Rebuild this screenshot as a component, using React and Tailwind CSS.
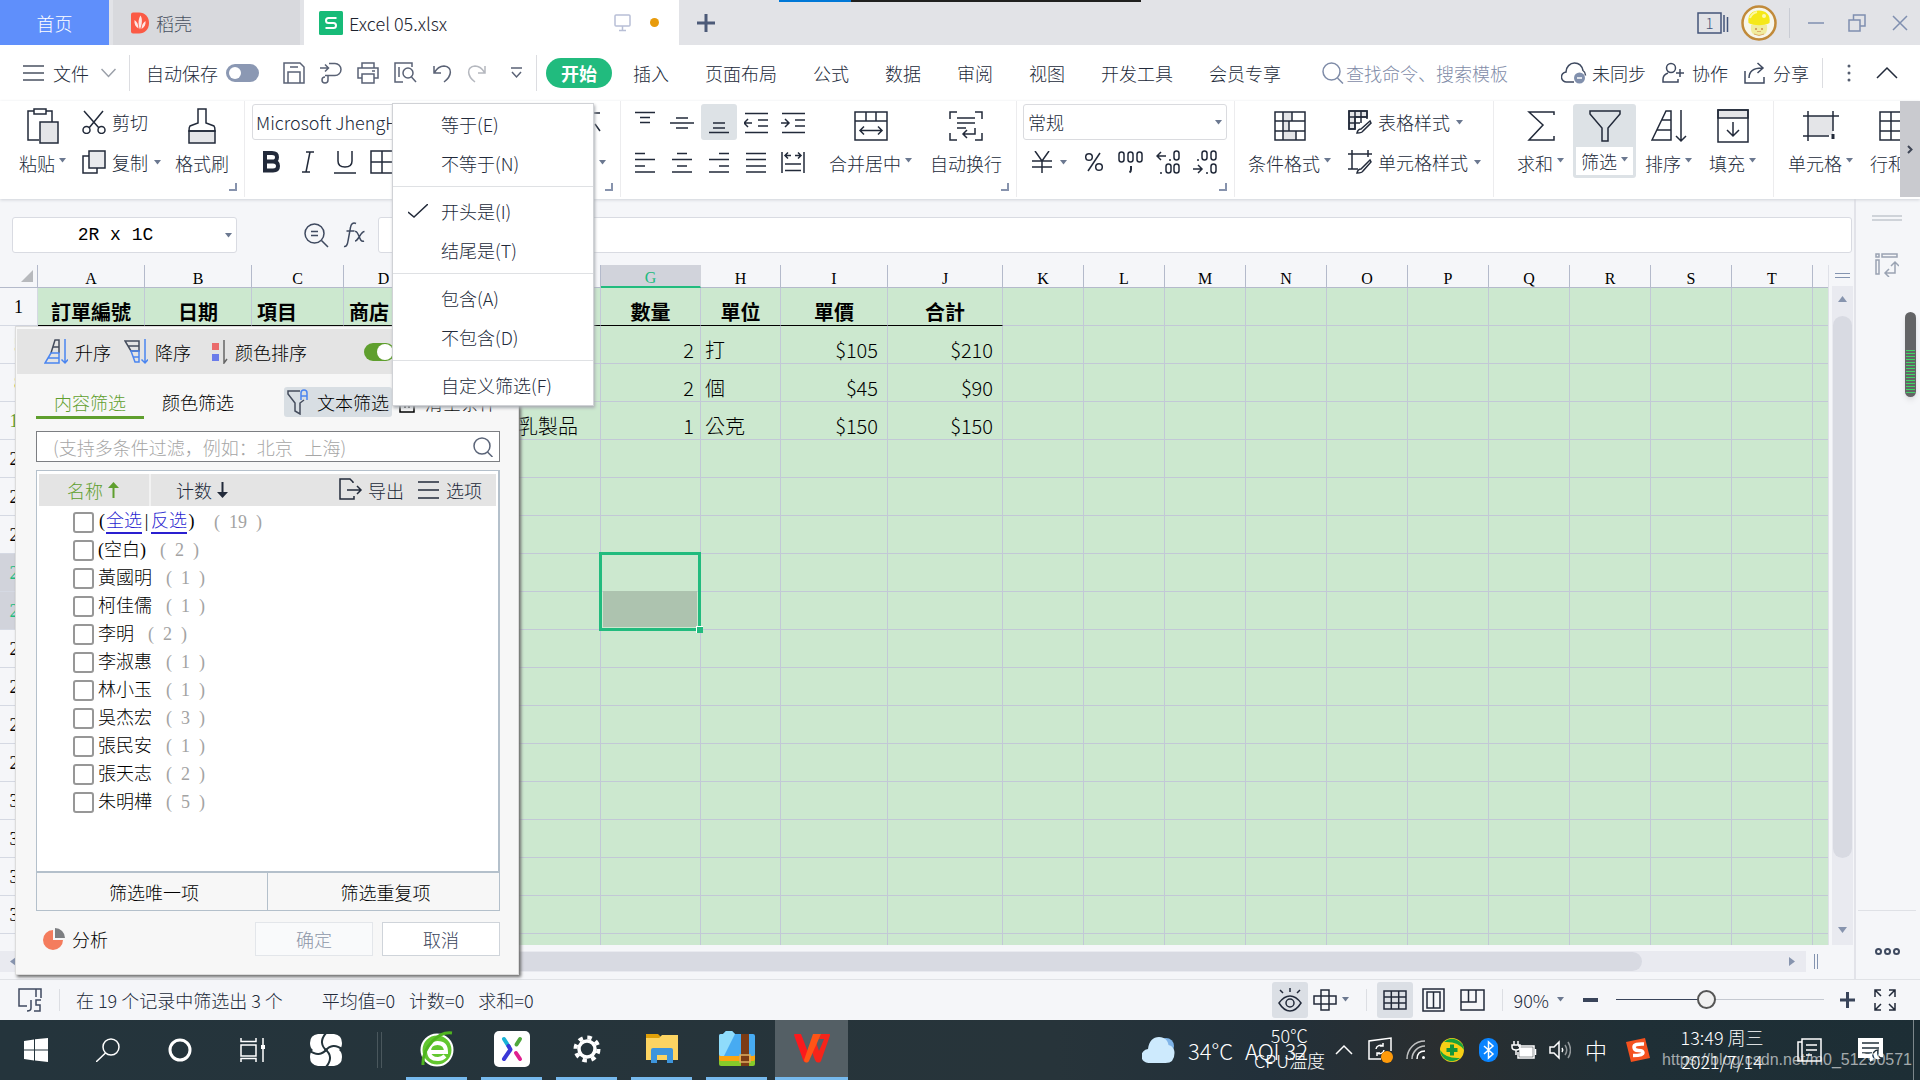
import { useState } from "react";
import clsx from "clsx";

const SANS = "font-['Noto_Sans_CJK_SC',sans-serif]";
const SERIF = "font-['Liberation_Serif','Noto_Sans_CJK_SC',serif]";

function Svg({ w = 24, h = 24, box, className, children, sw = 1.5 }) {
    return (
        <svg
            width={w}
            height={h}
            viewBox={box || `0 0 ${w} ${h}`}
            fill="none"
            stroke="currentColor"
            strokeWidth={sw}
            className={clsx("shrink-0", className)}
            aria-hidden="true"
        >
            {children}
        </svg>
    );
}

function Caret({ className }) {
    return (
        <svg width="7" height="5" viewBox="0 0 7 5" className={clsx("shrink-0 fill-[#6b7890]", className)} aria-hidden="true">
            <path d="M0 0h7L3.500 4.500z" />
        </svg>
    );
}

/* ---------- title bar ---------- */

function TitleBar() {
    return (
        <header className="relative flex h-[45px] shrink-0 items-stretch bg-[#e2e3e7]">
            <div className="absolute left-[779px] top-0 flex h-[2px] w-[362px] bg-[#20201f]">
                <div className="w-[72px] bg-[#0078d7]" />
            </div>
            <button className="w-[109px] bg-[#5f8ffb] text-lg text-white">首页</button>
            <button className="ml-1 flex w-[187px] items-center gap-[7px] bg-[#d8d9dd] pl-[18px] text-lg text-[#4a5262]">
                <svg width="18" height="22" viewBox="0 0 18 22" aria-hidden="true">
                    <path d="M0 2.500Q0 .5 2 .5h6c6 0 10 4.500 10 10.500S14 21.500 8 21.500H2q-2 0-2-2z" fill="#fb5a45" />
                    <path d="M9.500 3.500c2 3 2 8-.5 14-2-5-2-10 .5-14zM3.500 8c2.500 1.500 4 4.500 4 8.500C4.500 15 3 12 3.500 8zM14.500 9c.5 3.500-1 6.500-4 8 0-3.500 1.500-6.500 4-8z" fill="#fff" opacity=".85" />
                </svg>
                稻壳
            </button>
            <div className="ml-1 flex w-[375px] items-center bg-white pl-[15px] pr-5 text-lg text-[#1c222e]">
                <svg width="24" height="24" viewBox="0 0 24 24" className="mr-[6px]" aria-hidden="true">
                    <rect width="24" height="24" rx="1.500" fill="#17bb78" />
                    <path d="M17.500 7H9.500Q7 7 7 9.500T9.500 12h5Q17 12 17 14.500T14.500 17H6.500" fill="none" stroke="#fff" strokeWidth="2" />
                </svg>
                Excel 05.xlsx
                <Svg w={18} h={18} className="ml-auto mr-[18px] text-[#b8bfd6]">
                    <rect x="1" y="1" width="15" height="11" rx="1" />
                    <path d="M8.500 12v4.500M5 16.500h7" />
                </Svg>
                <span className="size-[9px] rounded-full bg-[#e89b0c]" />
            </div>
            <button className="flex w-[54px] items-center justify-center text-[#4c5a78]" aria-label="新建">
                <Svg w={18} h={18} sw={3}>
                    <path d="M9 0v18M0 9h18" />
                </Svg>
            </button>
            <div className="ml-auto flex items-center pr-3 text-[#7f8fb0]">
                <button className="mr-3 text-[#44557a]" aria-label="窗口">
                    <Svg w={32} h={22}>
                        <rect x="1" y="1" width="23" height="20" />
                        <path d="M27 3v17M30.500 5v15" />
                        <text x="12.500" y="16.500" textAnchor="middle" fontSize="15" fill="currentColor" stroke="none">1</text>
                    </Svg>
                </button>
                <button className="mr-3" aria-label="账号">
                    <svg width="36" height="36" viewBox="0 0 36 36" aria-hidden="true">
                        <circle cx="18" cy="18" r="16.500" fill="#f7f6ea" stroke="#c18a3a" strokeWidth="2.500" />
                        <path d="M10 20q-1 9 4 10h8q5-1 4-10z" fill="#f1ec9c" />
                        <path d="M7.500 18C6 9 12 5.500 18 5.500S30 9 28.500 18c-5 3-16 3-21 0z" fill="#f5e81a" />
                        <path d="M9 13q2-5 7-6" stroke="#fbf8a0" strokeWidth="2" fill="none" />
                        <circle cx="23" cy="11" r="2" fill="#fdf9b0" />
                        <circle cx="15" cy="24" r="1" fill="#c98a4a" />
                        <circle cx="21" cy="24" r="1" fill="#c98a4a" />
                        <path d="M13 29q5 3 10 0M16 26.500h4" stroke="#dfae6a" fill="none" />
                    </svg>
                </button>
                <span className="mr-[18px] h-[30px] w-px bg-[#c9ccd4]" />
                <button className="mr-6" aria-label="最小化">
                    <Svg w={16} h={18}><path d="M0 9h16" /></Svg>
                </button>
                <button className="mr-[26px]" aria-label="还原">
                    <Svg w={18} h={18}><path d="M1 6h11v11H1zM5.500 6V1H17v11h-5" /></Svg>
                </button>
                <button aria-label="关闭">
                    <Svg w={16} h={16}><path d="M1 1l14 14M15 1L1 15" /></Svg>
                </button>
            </div>
        </header>
    );
}

/* ---------- quick access + ribbon tabs ---------- */

const tabs = ["插入", "页面布局", "公式", "数据", "审阅", "视图", "开发工具", "会员专享"];

function TabRow() {
    return (
        <nav className="flex h-14 shrink-0 items-center bg-white pl-[23px] pr-[22px] text-lg text-[#222a3a]">
            <button className="flex items-center gap-[9px]">
                <Svg w={21} h={16} className="text-[#4a5262]"><path d="M0 1h21M0 8h21M0 15h21" /></Svg>
                文件
                <Svg w={15} h={10} className="ml-[3px] text-[#9a9fa8]"><path d="M.5 1l7 7.500 7-7.500" /></Svg>
            </button>
            <span className="ml-[13px] mr-4 h-9 w-px bg-[#dcdde1]" />
            <label className="flex items-center gap-2">
                自动保存
                <input
                    type="checkbox"
                    className="h-[18px] w-[33px] appearance-none rounded-full bg-[#8b98b3] before:ml-[3px] before:mt-[3px] before:block before:size-3 before:rounded-full before:bg-white"
                />
            </label>
            <div className="ml-6 flex items-center gap-[15px] text-[#5a6275]">
                <button aria-label="保存">
                    <Svg w={22} h={22}>
                        <path d="M1 1h16l4 4v16H1zM5 21V10h12v11M7 5h8" />
                    </Svg>
                </button>
                <button aria-label="输出为PDF">
                    <Svg w={22} h={22}>
                        <path d="M0 6h8M5 2.500L8.500 6 5 9.500M9 1.500h6a6 6 0 0 1 0 12H5M8 13.500V18a3 3 0 1 1-3-3" />
                    </Svg>
                </button>
                <button aria-label="打印">
                    <Svg w={22} h={22}>
                        <path d="M5 6V1h12v5M5 16H1V6h20v10h-4M5 12h12v9H5zM15 9h3" />
                    </Svg>
                </button>
                <button aria-label="打印预览">
                    <Svg w={23} h={22}>
                        <path d="M9 20H1V1h17v4M5 5v10" />
                        <circle cx="14" cy="11" r="5" />
                        <path d="M17.500 15l4.500 5" />
                    </Svg>
                </button>
                <button aria-label="撤销">
                    <Svg w={20} h={20}>
                        <path d="M2 3v7h7M2 10C5 5 9 3 12 3c9 1 8 10 0 16" />
                    </Svg>
                </button>
                <button className="text-[#b5b8bf]" aria-label="恢复">
                    <Svg w={20} h={20}>
                        <path d="M18 3v7h-7M18 10C15 5 11 3 8 3c-9 1-8 10 0 16" />
                    </Svg>
                </button>
                <button className="ml-2" aria-label="更多">
                    <Svg w={13} h={12}>
                        <path d="M1 1h11M2 5l4.500 5L11 5" />
                    </Svg>
                </button>
            </div>
            <span className="ml-[13px] mr-[9px] h-9 w-px bg-[#dcdde1]" />
            <button className="h-[30px] w-[66px] rounded-full bg-[#21bb7e] font-bold text-white">开始</button>
            <div className="ml-[21px] flex gap-9">
                {tabs.map((t) => (
                    <button key={t} className="whitespace-nowrap">{t}</button>
                ))}
            </div>
            <label className="ml-[41px] flex items-center gap-[2px] text-[#7f8ca8]">
                <Svg w={22} h={22}>
                    <circle cx="9.500" cy="9.500" r="8.500" />
                    <path d="M15.500 16l5.500 5.500" />
                </Svg>
                <input className="w-[180px] outline-none placeholder:text-[#7f8ca8]" placeholder="查找命令、搜索模板" />
            </label>
            <div className="ml-auto flex items-center">
                <button className="mr-4 flex items-center gap-[5px]">
                    <Svg w={26} h={22} className="text-[#3f4a60]">
                        <path d="M13 20H6a5 5 0 0 1-1-10C5 5 9 1 13.500 1S21 4 22 8.500a6 6 0 0 1 2.500 5" />
                        <circle cx="18.500" cy="16" r="5.500" fill="#8190ad" stroke="none" />
                        <path d="M16 16h5" stroke="#fff" />
                    </Svg>
                    未同步
                </button>
                <button className="mr-4 flex items-center gap-2">
                    <Svg w={22} h={22} className="text-[#3f4a60]">
                        <circle cx="9" cy="6" r="4.500" />
                        <path d="M6 11c-3 1-5 3.500-5 6.500V20h15v-3M18 7v8M14 11h8" />
                    </Svg>
                    协作
                </button>
                <button className="mr-[13px] flex items-center gap-[7px]">
                    <Svg w={22} h={22} className="text-[#3f4a60]">
                        <path d="M1 9v12h19v-6M5 16C5 9 9 6 18 6M13.500 1L19 6l-5.500 5" />
                    </Svg>
                    分享
                </button>
                <span className="h-[30px] w-px bg-[#dcdde1]" />
                <button className="ml-6 mr-[25px]" aria-label="菜单">
                    <svg width="4" height="18" viewBox="0 0 4 18" fill="#555e70" aria-hidden="true">
                        <circle cx="2" cy="2" r="1.500" /><circle cx="2" cy="9" r="1.500" /><circle cx="2" cy="16" r="1.500" />
                    </svg>
                </button>
                <button aria-label="收起功能区">
                    <Svg w={22} h={14}><path d="M1 12L11 2l10 10" /></Svg>
                </button>
            </div>
        </nav>
    );
}

/* ---------- ribbon ---------- */

function Group({ className, corner, children }) {
    return (
        <div className={clsx("relative flex shrink-0 border-r border-[#ececee] pt-[3px]", className)}>
            {children}
            {corner && (
                <Svg w={8} h={8} className="absolute bottom-[6px] right-[7px] text-[#8793ad]" sw={2}>
                    <path d="M7 0v7H0" />
                </Svg>
            )}
        </div>
    );
}

function BigButton({ icon, label, caret = true, active, className }) {
    return (
        <button
            className={clsx(
                "flex h-[74px] shrink-0 flex-col items-center rounded-[3px] text-lg text-[#222a3a]",
                active && "bg-[#dde2e6] px-[3px] pb-[3px]",
                className
            )}
        >
            <span className="flex h-[43px] items-center justify-center">{icon}</span>
            <span className={clsx("flex flex-1 items-center gap-1 whitespace-nowrap", active && "w-full justify-center bg-white")}>
                {label}
                {caret && <Caret className="mb-1" />}
            </span>
        </button>
    );
}

function SmallButton({ icon, label, caret }) {
    return (
        <button className="flex h-9 items-center gap-[6px] whitespace-nowrap text-lg">
            {icon}
            {label}
            {caret && <Caret />}
        </button>
    );
}

function IconButton({ label, active, children }) {
    return (
        <button
            aria-label={label}
            className={clsx("flex h-9 w-9 items-center justify-center rounded-[3px]", active && "bg-[#dde2e6]")}
        >
            {children}
        </button>
    );
}

const alignIcons = [
    ["顶端对齐", "M2 2.500h20M7 7.500h10M7 12.500h10"],
    ["垂直居中", "M6 8h12M0 13h24M6 18h12"],
    ["底端对齐", "M6 13h12M6 18h12M2 22.500h20"],
    ["减少缩进", "M0 13h8M4 9l-4 4 4 4M1 3.500h23M14 10h10M14 16h10M1 22.500h23"],
    ["增加缩进", "M0 13h8M4 9l4 4-4 4M1 3.500h23M14 10h10M14 16h10M1 22.500h23"],
    ["左对齐", "M2 3.500h10M2 9.500h20M2 16h10M2 22h20"],
    ["居中", "M7 3.500h10M2 9.500h20M7 16h10M2 22h20"],
    ["右对齐", "M12 3.500h10M2 9.500h20M12 16h10M2 22h20"],
    ["两端对齐", "M2 3.500h20M2 9.500h20M2 16h20M2 22h20"],
    ["分散对齐", "M1 2v21M23 2v21M4 5.500h6M14 5.500h6M7 2.500l-3 3 3 3M17 2.500l3 3-3 3M4 14h16M4 20.500h16"],
];

function Ribbon() {
    return (
        <section className="relative z-10 flex h-[98px] shrink-0 bg-white pb-[2px] text-[#222a3a] shadow-[0_1px_3px_#cfd2d8]">
            <Group corner className="pl-[19px] pr-[15px]">
                <BigButton
                    label="粘贴"
                    icon={
                        <Svg w={32} h={36}>
                            <path d="M12 32H1V3h24v11" />
                            <rect x="7" y="1" width="12" height="5" fill="#fff" />
                            <rect x="13" y="14" width="18" height="21" fill="#e4e5e8" />
                        </Svg>
                    }
                />
                <div className="ml-4 flex flex-col gap-1">
                    <SmallButton
                        label="剪切"
                        icon={
                            <Svg>
                                <path d="M2 1l15 17M21 1L7 18" />
                                <circle cx="4.500" cy="20" r="3.500" />
                                <circle cx="19.500" cy="20" r="3.500" />
                            </Svg>
                        }
                    />
                    <SmallButton
                        label="复制"
                        caret
                        icon={
                            <Svg>
                                <path d="M7 6H1v17h14v-5" />
                                <rect x="7" y="1" width="16" height="17" fill="#e9eaed" />
                            </Svg>
                        }
                    />
                </div>
                <BigButton
                    className="ml-[14px]"
                    label="格式刷"
                    caret={false}
                    icon={
                        <Svg w={28} h={36}>
                            <path d="M1 23v12h26V23z" fill="#e4e5e8" />
                            <path d="M10 1h8v14l8 3q1 1 1 5H1q0-4 1-5l8-3z" />
                        </Svg>
                    }
                />
            </Group>

            <Group corner className="pl-[7px] pr-[14px]">
                <div className="flex w-[354px] flex-col gap-1">
                    <div className="flex h-9 items-center justify-between">
                        <select
                            aria-label="字体"
                            className="h-9 w-[190px] appearance-none rounded-[3px] border border-[#dadbdf] bg-white pl-[3px] text-lg"
                        >
                            <option>Microsoft JhengHei</option>
                        </select>
                        <Svg className="mr-1"><path d="M2 3h20M12 3v18M17 14l5 7" /></Svg>
                    </div>
                    <div className="flex h-9 items-center">
                        <button className="flex w-[37px] justify-center" aria-label="加粗">
                            <Svg w={18} h={22} sw={4}>
                                <path d="M3 2h7q5 0 5 4.300T10 10.500H3zM3 10.500h8q5 0 5 4.500t-5 4.500H3z" />
                            </Svg>
                        </button>
                        <button className="flex w-[37px] justify-center" aria-label="倾斜">
                            <Svg w={14} h={22}><path d="M5 1h8M1 21h8M9 1L5 21" /></Svg>
                        </button>
                        <button className="flex w-[37px] justify-center" aria-label="下划线">
                            <Svg w={22} h={24}><path d="M4 1v10q0 6 7 6t7-6V1M0 23h22" /></Svg>
                        </button>
                        <button className="flex w-[37px] justify-center" aria-label="边框">
                            <Svg><path d="M1 1h22v22H1zM12 1v22M1 12h22" /></Svg>
                        </button>
                        <Caret className="ml-auto" />
                    </div>
                </div>
            </Group>

            <Group corner className="gap-[18px] pl-[6px] pr-[14px]">
                <div className="grid grid-cols-5 content-start gap-x-px gap-y-1">
                    {alignIcons.map(([name, d], i) => (
                        <IconButton key={name} label={name} active={i === 2}>
                            <Svg h={25} box="0 0 24 25"><path d={d} /></Svg>
                        </IconButton>
                    ))}
                </div>
                <BigButton
                    label="合并居中"
                    icon={
                        <Svg w={34} h={30}>
                            <path d="M1 1h32v28H1zM1 10h32M12 1v9M22 1v9M6 19.500h22M10 15.500l-4 4 4 4M24 15.500l4 4-4 4" />
                        </Svg>
                    }
                />
                <BigButton
                    label="自动换行"
                    caret={false}
                    icon={
                        <Svg w={34} h={30}>
                            <path d="M1 8V1h7M26 1h7v7M33 22v7h-7M8 29H1v-7M8 7h18M8 12h18M8 17h9M26 17v6H14M18 19l-4 4 4 4" />
                        </Svg>
                    }
                />
            </Group>

            <Group corner className="pl-[6px] pr-[7px]">
                <div className="flex w-[204px] flex-col gap-1">
                    <div className="relative">
                        <select
                            aria-label="数字格式"
                            className="h-9 w-full appearance-none rounded-[3px] border border-[#dadbdf] bg-white pl-1 text-lg"
                        >
                            <option>常规</option>
                        </select>
                        <Caret className="pointer-events-none absolute right-[5px] top-4" />
                    </div>
                    <div className="flex h-9 items-center gap-px">
                        <button className="flex w-[52px] items-center justify-center gap-2" aria-label="货币">
                            <Svg w={20} h={22}><path d="M3 0l7 10 7-10M0 10h20M0 16h20M10 10v12" /></Svg>
                            <Caret />
                        </button>
                        <IconButton label="百分比">
                            <Svg w={18} h={20}>
                                <circle cx="4" cy="5" r="3.300" /><circle cx="14" cy="15" r="3.300" /><path d="M15 1L3 19" />
                            </Svg>
                        </IconButton>
                        <IconButton label="千位分隔">
                            <Svg w={26} h={24}>
                                <rect x="1" y="2" width="5" height="10" rx="2.500" />
                                <rect x="10" y="2" width="5" height="10" rx="2.500" />
                                <rect x="19" y="2" width="5" height="10" rx="2.500" />
                                <path d="M13 16v3.500q0 2-1.500 3" strokeWidth="2" />
                            </Svg>
                        </IconButton>
                        <IconButton label="增加小数位">
                            <Svg w={25} h={25}>
                                <path d="M1 6h9M5 2L1 6l4 4M14 9v2M5 22v2" />
                                <rect x="18" y="1" width="5" height="9" rx="2.500" />
                                <rect x="10" y="14" width="5" height="9" rx="2.500" />
                                <rect x="18" y="14" width="5" height="9" rx="2.500" />
                            </Svg>
                        </IconButton>
                        <IconButton label="减少小数位">
                            <Svg w={25} h={25}>
                                <path d="M0 19h9M5 15l4 4-4 4M5 9v2M14 22v2" />
                                <rect x="9" y="1" width="5" height="9" rx="2.500" />
                                <rect x="18" y="1" width="5" height="9" rx="2.500" />
                                <rect x="18" y="14" width="5" height="9" rx="2.500" />
                            </Svg>
                        </IconButton>
                    </div>
                </div>
            </Group>

            <Group className="gap-[17px] pl-[13px] pr-[12px]">
                <BigButton
                    label="条件格式"
                    icon={
                        <Svg w={32} h={30}>
                            <path d="M9 1h9v9H9zM9 10h6v10H9zM9 20h13v9H9z" fill="#e4e5e8" stroke="none" />
                            <path d="M1 1h30v28H1zM1 10h30M1 20h30M9 1v28M18 1v9M15 10v10M22 20v9" />
                        </Svg>
                    }
                />
                <div className="flex flex-col gap-1">
                    <SmallButton
                        label="表格样式"
                        caret
                        icon={
                            <Svg>
                                <path d="M1 1h18v6H7v12H1z" fill="#e4e5e8" />
                                <path d="M7 1v18H1V1h18v8M1 7h18M1 13h11M13 1v12" />
                                <path d="M22 11l-9 8q-3 0-4 4 5 0 6-2l8-8z" fill="#fff" />
                            </Svg>
                        }
                    />
                    <SmallButton
                        label="单元格样式"
                        caret
                        icon={
                            <Svg>
                                <path d="M4 0v19M0 4h24M20 0v7M0 19h10" />
                                <path d="M22 10l-9 9q-3 0-4 4 5 0 6-2l8-9z" />
                            </Svg>
                        }
                    />
                </div>
            </Group>

            <Group className="gap-px pl-[15px] pr-[9px]">
                <BigButton className="w-[63px]" label="求和" icon={
                    <Svg w={28} h={30}><path d="M27 4V1H2l14 13L2 29h25v-4" /></Svg>
                } />
                <BigButton className="w-[63px]" active label="筛选" icon={
                    <Svg w={34} h={34}><path d="M2 2h30v3L20 19v13h-6V19L2 5z" /></Svg>
                } />
                <BigButton className="w-[63px]" label="排序" icon={
                    <Svg w={36} h={34}>
                        <path d="M1 31L15 2h5v29zM11 11h9M6 21h14M30 1v31M25 27l5 5 5-5" />
                    </Svg>
                } />
                <BigButton className="w-[63px]" label="填充" icon={
                    <Svg w={32} h={34}>
                        <path d="M1 1h30v8H1z" fill="#e4e5e8" />
                        <path d="M1 1h30v32H1zM16 13v14M10 21l6 6 6-6" />
                    </Svg>
                } />
            </Group>

            <div className="flex flex-1 gap-[17px] overflow-hidden pl-[14px] pt-[3px]">
                <BigButton label="单元格" icon={
                    <Svg w={36} h={30}>
                        <path d="M5 5h25v19H5z" fill="#e4e5e8" stroke="none" />
                        <path d="M5 0v30M0 5h36M30 0v20M0 25h26" />
                        <path d="M30 23v5" strokeWidth="3" />
                    </Svg>
                } />
                <BigButton label="行和列" icon={
                    <Svg w={48} h={30}>
                        <path d="M1 1h46v28H1zM1 10h46M1 20h46M12 1v28" />
                    </Svg>
                } />
            </div>
            <button className="flex w-5 shrink-0 items-center justify-center bg-[#c9cacf]" aria-label="向右滚动">
                <Svg w={6} h={9} sw={2} className="text-[#3f4656]"><path d="M1 1l3.500 3.500L1 8" /></Svg>
            </button>
        </section>
    );
}

/* ---------- sheet ---------- */

function FormulaBar() {
    return (
        <div className="flex h-[66px] shrink-0 items-start pl-3 pr-[2px] pt-[18px]">
            <div className="relative">
                <input
                    aria-label="名称框"
                    defaultValue="2R x 1C"
                    className="h-9 w-[225px] rounded-[3px] border border-[#d9dbe2] bg-white pr-[18px] text-center font-['Liberation_Mono',monospace] text-lg text-black"
                />
                <Caret className="absolute right-[5px] top-4" />
            </div>
            <div className="ml-[67px] flex h-9 items-center gap-[14px] text-[#3f4a60]">
                <Svg w={25} h={25}>
                    <circle cx="10.500" cy="10.500" r="9.500" />
                    <path d="M17.500 17.500l6.500 6.500M7 8.500h7M7 12.500h7" />
                </Svg>
                <Svg w={23} h={26}>
                    <path d="M13 1.500c-3-1.500-5 .5-5.500 4L5 19c-.5 4-2 6-4 5.500M3.500 9h8" />
                    <path d="M12 9.500c4-1.500 4 12 9 9.500M21.500 9.500c-4 0-6 9.500-9.500 9.500" />
                </Svg>
            </div>
            <input aria-label="编辑栏" className="ml-3 h-9 min-w-0 flex-1 rounded-[3px] border border-[#d9dbe2] bg-white px-2 text-lg" />
        </div>
    );
}

const columns = "ABCDEFGHIJKLMNOPQRST".split("");

const rowList = [
    { n: 1, head: true, cells: { A: "訂單編號", B: "日期", C: "項目", D: "商店", G: "數量", H: "單位", I: "單價", J: "合計" } },
    { n: 5, cells: { G: "2", H: "打", I: "$105", J: "$210" } },
    { n: 8, cells: { G: "2", H: "個", I: "$45", J: "$90" } },
    { n: 19, cells: { F: "乳製品", G: "1", H: "公克", I: "$150", J: "$150" } },
    ...Array.from({ length: 14 }, (_, i) => ({ n: 21 + i, cells: {} })),
];

function cellClass(col, row) {
    if (row.head) {
        return clsx(
            "font-bold",
            "ABCDEFGHIJ".includes(col) && "!border-b-black",
            col === "C" || col === "D" ? "pl-[5px] text-left" : "text-center"
        );
    }
    if (col === "G") return "pr-[6px] text-right";
    if (col === "I" || col === "J") return "pr-[9px] text-right";
    return "pl-1 text-left";
}

function Sheet() {
    return (
        <div className="min-w-0 flex-1 overflow-hidden border-r border-[#dfe1e8] bg-[#cce8cf]">
            <table className="w-full table-fixed border-separate border-spacing-0 text-black">
                <colgroup>
                    <col className="w-[38px]" />
                    <col className="w-[107px]" />
                    <col className="w-[107px]" />
                    <col className="w-[92px]" />
                    <col className="w-[80px]" />
                    <col className="w-[90px]" />
                    <col className="w-[87px]" />
                    <col className="w-[100px]" />
                    <col className="w-[80px]" />
                    <col className="w-[107px]" />
                    <col className="w-[115px]" />
                    {columns.slice(10).map((c) => <col key={c} className="w-[81px]" />)}
                    <col />
                </colgroup>
                <thead>
                    <tr className={clsx("h-[23px] bg-[#f5f6f9] text-base leading-4", SERIF)}>
                        <th className="border-b border-r border-[#b4bacb] p-0">
                            <svg width="12" height="12" viewBox="0 0 12 12" className="ml-auto mr-1" aria-hidden="true">
                                <path d="M12 0v12H0z" fill="#b7b9bd" />
                            </svg>
                        </th>
                        {columns.map((c) => (
                            <th
                                key={c}
                                className={clsx(
                                    "border-r px-0 pb-0 pt-[5px] font-normal",
                                    c === "G"
                                        ? "border-b-2 border-b-[#21bb7e] border-r-[#d1d3db] bg-[#d1d3db] text-[#21bb7e]"
                                        : "border-b border-[#b4bacb]"
                                )}
                            >
                                {c}
                            </th>
                        ))}
                        <th className="border-b border-[#b4bacb] p-0" />
                    </tr>
                </thead>
                <tbody>
                    {rowList.map((row) => {
                        const picked = row.n === 24 || row.n === 25;
                        return (
                            <tr key={row.n} className="h-[38px]">
                                <th
                                    className={clsx(
                                        "border-b border-r border-[#d5d9e3] p-0 text-center text-lg font-normal",
                                        SERIF,
                                        picked ? "bg-[#d1d3db]" : "bg-[#f5f6f9]",
                                        picked && "text-[#21bb7e]",
                                        [5, 8, 19].includes(row.n) && "text-[#5f9f2e]"
                                    )}
                                >
                                    {row.n}
                                </th>
                                {columns.map((c) => (
                                    <td
                                        key={c}
                                        className={clsx(
                                            "relative whitespace-nowrap border-b border-r border-[#c2c8d6] px-0 pb-px pt-0 align-bottom font-['Noto_Sans_CJK_TC',sans-serif] text-xl leading-6",
                                            cellClass(c, row)
                                        )}
                                    >
                                        {row.cells[c]}
                                        {c === "G" && row.n === 24 && (
                                            <div className="absolute -left-[2px] -top-[2px] z-[1] flex h-[79px] w-[102px] flex-col justify-end border-[3px] border-[#21bb7e]">
                                                <div className="mx-px mb-px h-[36px] bg-[#adc3af]" />
                                                <span className="absolute -bottom-[5px] -right-[5px] size-[7px] border-l border-t border-white bg-[#21bb7e]" />
                                            </div>
                                        )}
                                    </td>
                                ))}
                                <td className="border-b border-[#c2c8d6] p-0" />
                            </tr>
                        );
                    })}
                </tbody>
            </table>
        </div>
    );
}

function VerticalScroll() {
    return (
        <div className="ml-[3px] mr-px flex w-[21px] shrink-0 flex-col">
            <div className="flex h-[21px] flex-col items-center justify-center gap-[3px]">
                <span className="h-px w-[15px] bg-[#8494b0]" />
                <span className="h-px w-[15px] bg-[#8494b0]" />
            </div>
            <div className="flex flex-1 flex-col items-center bg-[#e9eaf0]">
                <Svg w={9} h={6} className="mb-[14px] mt-[10px] fill-[#8794ae] text-transparent"><path d="M0 6h9L4.500 0z" /></Svg>
                <div className="w-[19px] flex-1 rounded-full bg-[#d8dae2]" />
                <Svg w={9} h={6} className="mb-3 mt-[69px] fill-[#8794ae] text-transparent"><path d="M0 0h9L4.500 6z" /></Svg>
            </div>
        </div>
    );
}

function HorizontalScroll() {
    return (
        <div className="flex h-[34px] shrink-0 items-center pb-[2px] pr-9">
            <div className="flex h-[21px] flex-1 items-center bg-[#e9eaf0]">
                <Svg w={6} h={9} className="ml-[10px] mr-[9px] fill-[#8794ae] text-transparent"><path d="M6 0v9L0 4.500z" /></Svg>
                <div className="h-[19px] flex-1 rounded-full bg-[#d8dae2]" />
                <Svg w={6} h={9} className="ml-[147px] mr-[11px] fill-[#8794ae] text-transparent"><path d="M0 0v9l6-4.500z" /></Svg>
            </div>
            <div className="ml-2 h-[15px] w-1 border-x border-[#8494b0]" />
        </div>
    );
}

function SideRail() {
    return (
        <aside className="relative flex w-[66px] shrink-0 flex-col items-center border-l-2 border-[#e2e3e9] pr-[2px] pt-4">
            <div className="h-[6px] w-[30px] border-y-2 border-[#cfd3d9]" />
            <button className="mt-8 text-[#9aa3b3]" aria-label="选择窗格">
                <Svg w={24} h={24}>
                    <path d="M1 1h3v3H1zM7 1h15v3H7zM1 7h3v14H1zM20 10v10h-9M16 13l4-4 4 4M14 16l-4 4 4 4" />
                </Svg>
            </button>
            <div className="absolute right-1 top-[113px] flex h-[85px] w-[11px] flex-col items-center justify-end gap-[2px] rounded-full bg-[#636466] pb-1 shadow-md">
                {Array.from({ length: 15 }, (_, i) => (
                    <span key={i} className="h-px w-[9px] bg-[#3fd565]" />
                ))}
            </div>
            <hr className="mt-auto w-[58px] border-[#dfe1e6]" />
            <button className="mb-6 mt-[37px] flex gap-[2px]" aria-label="更多面板">
                <span className="size-[7px] rounded-full border-2 border-[#3f4a60]" />
                <span className="size-[7px] rounded-full border-2 border-[#3f4a60]" />
                <span className="size-[7px] rounded-full border-2 border-[#3f4a60]" />
            </button>
        </aside>
    );
}

/* ---------- filter panel ---------- */

const people = [
    ["(空白)", 2],
    ["黃國明", 1],
    ["柯佳儒", 1],
    ["李明", 2],
    ["李淑惠", 1],
    ["林小玉", 1],
    ["吳杰宏", 3],
    ["張民安", 1],
    ["張天志", 2],
    ["朱明樺", 5],
];

function Count({ n }) {
    return (
        <span className="ml-[14px] flex gap-[9px] text-[#a3a3a3]">
            <span>(</span>
            <span>{n}</span>
            <span>)</span>
        </span>
    );
}

function Check({ label, id }) {
    return (
        <input
            id={id}
            type="checkbox"
            aria-label={label}
            className="size-[21px] shrink-0 appearance-none rounded-[3px] border-2 border-[#979797] bg-white checked:bg-[#5f9f2e]"
        />
    );
}

function FilterPanel() {
    return (
        <section className="absolute left-[15px] top-[127px] z-20 w-[504px] border border-[#dcdcdc] bg-[#f7f7f7] pb-[18px] pt-[2px] text-lg text-black shadow-[2px_2px_3px_#6b6b6b]">
            <div className="ml-px flex h-[45px] items-center bg-[#e4e4e4] pl-[27px]">
                <button className="flex items-center gap-[7px]">
                    <Svg w={24} h={26}>
                        <path d="M7 14L11 1h4v13" stroke="#444c5c" />
                        <path d="M9 8h6" stroke="#444c5c" />
                        <path d="M7 14L1 24h14V14zM4 19h11M21 0v24M17.500 20.500L21 24l3-3.500" stroke="#4a85f0" />
                    </Svg>
                    升序
                </button>
                <button className="ml-[13px] flex items-center gap-[7px]">
                    <Svg w={24} h={26}>
                        <path d="M1 2h14v10H7zM4 7h11" stroke="#444c5c" />
                        <path d="M7 12l4 11h4V12zM9 18h6M21 0v24M17.500 20.500L21 24l3-3.500" stroke="#4a85f0" />
                    </Svg>
                    降序
                </button>
                <button className="ml-[21px] flex items-center gap-[7px]">
                    <Svg w={16} h={24}>
                        <path d="M0 3h7v7H0z" fill="#ea6b6b" stroke="none" />
                        <path d="M0 14h7v7H0z" fill="#6b7cea" stroke="none" />
                        <path d="M12 0v23l3-4" stroke="#666" />
                    </Svg>
                    颜色排序
                </button>
                <input
                    type="checkbox"
                    defaultChecked
                    aria-label="高级模式"
                    className="ml-[57px] h-[18px] w-[31px] appearance-none rounded-full bg-[#5f9f2e] before:ml-[13px] before:mt-[1px] before:block before:size-4 before:rounded-full before:bg-white"
                />
            </div>

            <div className="mt-[13px] flex h-8 items-start pl-5 pr-[18px]">
                <button className="flex h-8 w-[108px] items-center justify-center border-b-3 border-[#5f9f2e] text-[#5f9f2e]">内容筛选</button>
                <button className="ml-[18px] flex h-[30px] items-center">颜色筛选</button>
                <button className="ml-[50px] flex h-[30px] w-[108px] items-center gap-[9px] rounded-[3px] bg-[#d8dee3] pl-[3px]">
                    <Svg w={21} h={26}>
                        <path d="M13 2H1v3l7 9v8l5 3V14l4-3" stroke="#444c5c" />
                        <path d="M14 11V4q0-3 3-3t3 3v7M14 7h6" stroke="#4a85f0" />
                    </Svg>
                    文本筛选
                </button>
                <button className="ml-[6px] flex h-[30px] items-center gap-[9px]">
                    <Svg w={18} h={22}><path d="M0 5h18M2 5v16h14V5M6 5V1h6v4M7 10v7M11 10v7" /></Svg>
                    清空条件
                </button>
            </div>

            <label className="ml-5 mr-[18px] mt-3 flex h-[31px] items-center border border-[#7c7e82] bg-white pr-[6px]">
                <input
                    className="min-w-0 flex-1 pl-4 outline-none placeholder:text-[#a6a6a6]"
                    placeholder="(支持多条件过滤，例如：北京   上海)"
                />
                <Svg w={20} h={20} className="text-[#5a6478]">
                    <circle cx="9" cy="9" r="8" />
                    <path d="M14.500 15l5 5" />
                </Svg>
            </label>

            <div className="ml-5 mr-[18px] mt-2 h-[403px] border border-b-2 border-r-2 border-[#b4c0cb] bg-white px-[2px] pt-[3px]">
                <div className="flex h-8 items-center bg-[#e4e4e4] pr-[14px] text-[#222a3a]">
                    <button className="flex h-full w-28 items-center gap-[5px] border-r-2 border-[#f2f2f2] pl-7 text-[#5f9f2e]">
                        名称
                        <Svg w={11} h={16} sw={2}><path d="M5.500 16V2" /><path d="M0 6l5.500-6L11 6z" fill="currentColor" stroke="none" /></Svg>
                    </button>
                    <button className="flex items-center gap-[5px] pl-[25px]">
                        计数
                        <Svg w={11} h={16} sw={2}><path d="M5.500 0v14" /><path d="M0 10l5.500 6 5.500-6z" fill="currentColor" stroke="none" /></Svg>
                    </button>
                    <button className="ml-auto flex items-center gap-[5px]">
                        <Svg><path d="M14 5V4L11 1H1v20h14v-3M8 12h14M18 8l4 4-4 4" /></Svg>
                        导出
                    </button>
                    <button className="ml-[14px] flex items-center gap-[7px]">
                        <Svg w={21} h={18}><path d="M0 1h21M0 9h21M0 17h21" /></Svg>
                        选项
                    </button>
                </div>
                <ul className={clsx("pl-[34px] pt-[2px]", SERIF)}>
                    <li className="flex h-7 items-center">
                        <Check label="全选" />
                        <span className="ml-1 flex leading-[22px]">
                            <span className="w-2 text-center">(</span>
                            <a href="#all" className="border-b-2 border-[#2a1fd0] text-[#2a1fd0]">全选</a>
                            <span className="w-[9px] text-center">|</span>
                            <a href="#invert" className="border-b-2 border-[#2a1fd0] text-[#2a1fd0]">反选</a>
                            <span className="w-[9px] text-center">)</span>
                        </span>
                        <span className="ml-1" />
                        <Count n={19} />
                    </li>
                    {people.map(([name, n]) => (
                        <li key={name} className="flex h-7 items-center">
                            <Check id={`p-${name}`} />
                            <label htmlFor={`p-${name}`} className="ml-1 min-w-9">{name}</label>
                            <Count n={n} />
                        </li>
                    ))}
                </ul>
            </div>
            <div className="ml-5 mr-[18px] grid h-[38px] grid-cols-2 divide-x divide-[#b4c0cb] border border-t-0 border-[#b4c0cb]">
                <button className="pl-1">筛选唯一项</button>
                <button className="pl-1">筛选重复项</button>
            </div>
            <div className="ml-5 mr-[18px] mt-[11px] flex h-[34px] items-center">
                <button className="ml-[7px] flex items-center gap-[7px]">
                    <svg width="22" height="22" viewBox="0 0 22 22" aria-hidden="true">
                        <path d="M10 2a10 10 0 1 0 10 10H10z" fill="#f47c5d" />
                        <path d="M12 0a10 10 0 0 1 10 10H12z" fill="#7d7f82" />
                    </svg>
                    分析
                </button>
                <button className="ml-auto h-[34px] w-[118px] border border-[#e3e6ea] bg-[#f9fafb] text-[#8d96a8]" disabled>确定</button>
                <button className="ml-[9px] h-[34px] w-[118px] border border-[#cfd4da] bg-white text-[#39445a]">取消</button>
            </div>
        </section>
    );
}

const menuSections = [
    ["等于(E)", "不等于(N)"],
    ["开头是(I)", "结尾是(T)"],
    ["包含(A)", "不包含(D)"],
    ["自定义筛选(F)"],
];

function TextFilterMenu() {
    const [picked, setPicked] = useState("开头是(I)");
    return (
        <div
            role="menu"
            className="absolute left-[392px] top-[103px] z-30 w-[202px] border border-[#d0d2d6] bg-white pb-px text-lg text-[#222a3a] shadow-[1px_2px_3px_#a9adb3]"
        >
            {menuSections.map((items, i) => (
                <div key={items[0]}>
                    {i > 0 && <hr className="my-1 border-[#dfe1e4]" />}
                    {items.map((t) => (
                        <button
                            key={t}
                            role="menuitem"
                            onClick={() => setPicked(t)}
                            className="flex h-[39px] w-full items-center pl-[15px]"
                        >
                            <span className="w-[33px]">
                                {picked === t && <Svg w={20} h={14}><path d="M0 8l6 5L20 0" /></Svg>}
                            </span>
                            {t}
                        </button>
                    ))}
                </div>
            ))}
        </div>
    );
}

/* ---------- status bar ---------- */

function StatusBar() {
    return (
        <footer className="flex h-[41px] shrink-0 items-center border-t border-[#e0e2e6] bg-[#f5f6f9] pb-px pr-6 text-lg text-[#222a3a]">
            <Svg w={24} h={24} className="ml-[18px] text-[#3f4a60]">
                <path d="M9 18H1V1h17v8M18 1h5v9" />
                <path d="M13 12v8q0 3-4 3M23 12h-5v5h4v6h-6" />
            </Svg>
            <span className="ml-[17px] mr-4 h-[22px] w-px bg-[#dcdee3]" />
            <span>在 19 个记录中筛选出 3 个</span>
            <span className="ml-[39px]">平均值=0</span>
            <span className="ml-[14px]">计数=0</span>
            <span className="ml-[14px]">求和=0</span>
            <div className="ml-auto flex items-center">
                <button className="flex size-9 items-center justify-center rounded-[3px] bg-[#dbdfe5]" aria-label="护眼模式">
                    <Svg w={24} h={24}>
                        <path d="M1 15Q6 8 12 8t11 7q-5 8-11 8T1 15zM12 0v4M2 2l3 3M22 2l-3 3" />
                        <circle cx="12" cy="15" r="4" />
                    </Svg>
                </button>
                <button className="ml-[5px] flex items-center gap-[5px]" aria-label="阅读模式">
                    <Svg w={24} h={22}>
                        <path d="M8 1h8v20H8zM1 7h22v8H1z" />
                    </Svg>
                    <Caret />
                </button>
                <span className="ml-[17px] mr-[10px] h-[22px] w-px bg-[#dcdee3]" />
                <button className="flex size-9 items-center justify-center rounded-[3px] bg-[#dbdfe5]" aria-label="普通视图">
                    <Svg w={24} h={20}>
                        <path d="M1 1h22v18H1zM1 7h22M1 13h22M8.300 1v18M15.700 1v18" />
                    </Svg>
                </button>
                <button className="ml-[9px]" aria-label="页面布局">
                    <Svg w={23} h={24}><path d="M1 1h21v22H1zM5 4h13v16H5zM11.500 4v16" /></Svg>
                </button>
                <button className="ml-[15px]" aria-label="分页预览">
                    <Svg w={25} h={22}><path d="M1 1h23v20H1zM1 13h15V1M8.500 1v12" /></Svg>
                </button>
                <span className="ml-[17px] mr-[11px] h-[22px] w-px bg-[#dcdee3]" />
                <button className="flex items-center gap-2">90%<Caret /></button>
                <button className="ml-[19px]" aria-label="缩小">
                    <Svg w={15} h={16} sw={4} className="text-[#39445a]"><path d="M0 8h15" /></Svg>
                </button>
                <input
                    type="range"
                    aria-label="显示比例"
                    defaultValue="43"
                    className="ml-[18px] h-5 w-[208px] appearance-none bg-transparent [&::-webkit-slider-runnable-track]:h-px [&::-webkit-slider-runnable-track]:bg-[linear-gradient(90deg,#39445a_43%,#c5c9d1_43%)] [&::-webkit-slider-thumb]:-mt-[9px] [&::-webkit-slider-thumb]:size-[19px] [&::-webkit-slider-thumb]:appearance-none [&::-webkit-slider-thumb]:rounded-full [&::-webkit-slider-thumb]:border-2 [&::-webkit-slider-thumb]:border-[#555] [&::-webkit-slider-thumb]:bg-[#f0f0f0]"
                />
                <button className="ml-4" aria-label="放大">
                    <Svg w={15} h={16} sw={3} className="text-[#39445a]"><path d="M0 8h15M7.500 0v16" /></Svg>
                </button>
                <button className="ml-[19px]" aria-label="全屏">
                    <Svg w={22} h={22}>
                        <path d="M1 8V1h6M1 1l6 6M15 1h6v7M21 1l-6 6M21 14v7h-6M21 21l-6-6M7 21H1v-7M1 21l6-6" />
                    </Svg>
                </button>
            </div>
        </footer>
    );
}

/* ---------- taskbar ---------- */

const apps = [
    {
        name: "浏览器",
        icon: (
            <svg width="36" height="36" viewBox="0 0 36 36" aria-hidden="true">
                <circle cx="18" cy="19" r="15.500" fill="#62c72f" stroke="#fff" strokeWidth="2" />
                <path d="M11 21h16q0-9-8.500-9T10 20t9 8q4 0 7-3" fill="none" stroke="#fff" strokeWidth="4" />
                <path d="M33 2C20 0 3 16 4 34" fill="none" stroke="#4fb51f" strokeWidth="3" />
            </svg>
        ),
    },
    {
        name: "Xmind",
        icon: (
            <svg width="36" height="36" viewBox="0 0 36 36" aria-hidden="true">
                <rect width="36" height="36" rx="5" fill="#fff" />
                <g fill="none" strokeWidth="4" strokeLinecap="round" strokeLinejoin="round">
                    <path d="M10 8l5 8" stroke="#19b2d6" />
                    <path d="M14.500 15l2 3.500L10 28" stroke="#3b38d8" />
                    <path d="M26 8l-3.500 5.500" stroke="#4fa83c" />
                    <path d="M22 22l4 6" stroke="#e01f8f" />
                </g>
            </svg>
        ),
    },
    {
        name: "设置",
        icon: (
            <svg width="28" height="28" viewBox="0 0 28 28" fill="none" stroke="#fff" aria-hidden="true">
                <circle cx="14" cy="14" r="8" strokeWidth="3.500" />
                <circle cx="14" cy="14" r="11.500" strokeWidth="4" strokeDasharray="4.500 4.530" />
            </svg>
        ),
    },
    {
        name: "文件资源管理器",
        icon: (
            <svg width="34" height="32" viewBox="0 0 34 32" aria-hidden="true">
                <path d="M1 1h12l3 3-3 2H1z" fill="#e0a008" />
                <path d="M1 5h13l3-3h16v25H1z" fill="#fcd462" />
                <path d="M6 17q0-2 2-2h18q2 0 2 2v13h-6v-8H12v8H6z" fill="#3d95dd" />
            </svg>
        ),
    },
    {
        name: "压缩",
        icon: (
            <svg width="36" height="36" viewBox="0 0 36 36" aria-hidden="true">
                <path d="M0 26h36v7q0 2-2 2H2q-2 0-2-2z" fill="#86c92a" />
                <path d="M0 22h36v6q0 2-2 2H2q-2 0-2-2z" fill="#fba511" />
                <path d="M0 5q0-2 2-2h2l3-3h6l3 3h18q2 0 2 2v18q0 2-2 2H2q-2 0-2-2z" fill="#47abf2" />
                <path d="M0 5q0-2 2-2h2l3-3h6l3 3L5 25H2q-2 0-2-2z" fill="#8fdcfb" />
                <path d="M22 3h8v32h-8z" fill="#7c3b14" />
                <path d="M21 24h10v7H21z" fill="none" stroke="#e0b060" strokeWidth="1.500" />
            </svg>
        ),
    },
];

function TrayItem({ className = "w-9", label, children }) {
    return (
        <button aria-label={label} className={clsx("flex h-full shrink-0 items-center justify-center", className)}>
            {children}
        </button>
    );
}

function Taskbar() {
    return (
        <div className="relative flex h-[60px] shrink-0 items-stretch bg-[linear-gradient(90deg,#24343c,#27343a_55%,#22303a_66%,#2a2e30_75%,#1f2f36_85%,#1d2e35)] pr-[6px] text-white">
            <TrayItem label="开始" className="w-[72px]">
                <svg width="24" height="24" viewBox="0 0 24 24" fill="#fff" aria-hidden="true">
                    <path d="M0 3l10-1.500v10H0zM11 1.300L24 0v11.500H11zM0 12.500h10v10L0 21zM11 12.500h13V24l-13-1.500z" />
                </svg>
            </TrayItem>
            <TrayItem label="搜索" className="w-[72px]">
                <Svg><circle cx="15" cy="9" r="8" /><path d="M9.500 15L0 24" /></Svg>
            </TrayItem>
            <TrayItem label="语音助手" className="w-[72px]">
                <Svg sw={3}><circle cx="12" cy="12" r="10" /></Svg>
            </TrayItem>
            <TrayItem label="任务视图" className="w-[72px]">
                <Svg w={25}>
                    <path d="M1 0v3.500h15V0M1 7h15v11H1zM1 24v-3.500h15V24M23 0v24" />
                    <path d="M21 7h4v4h-4z" fill="#fff" stroke="none" />
                </Svg>
            </TrayItem>
            <TrayItem label="小程序" className="w-[76px]">
                <svg width="34" height="34" viewBox="0 0 34 34" aria-hidden="true">
                    <path d="M9 1h16q8 1 8 9 0 5-3 7 3 2 3 7 0 8-8 9H9q-8-1-8-9 0-5 3-7-3-2-3-7 0-8 8-9z" fill="#fff" />
                    {[0, 90, 180, 270].map((r) => (
                        <path key={r} transform={`rotate(${r} 17 17)`} d="M18 18C12 13 11 7 17 0" fill="none" stroke="#24343b" strokeWidth="2" />
                    ))}
                </svg>
            </TrayItem>
            <span className="ml-[13px] h-9 w-[5px] self-center border-x border-[#4a575d]" />
            <div className="ml-6 flex gap-[14px]">
                {apps.map((a) => (
                    <TrayItem key={a.name} label={a.name} className="w-[61px] border-b-3 border-[#76b9ed]">
                        {a.icon}
                    </TrayItem>
                ))}
            </div>
            <TrayItem label="WPS" className="ml-2 w-[73px] border-b-3 border-[#76b9ed] bg-[#545f65]">
                <svg width="36" height="29" viewBox="0 0 36 29" aria-hidden="true">
                    <path d="M36 1.500L27 27q-1 2-3 1.500-2 0-3-2.500l-3-8 4-10 3 9 5-12h-5l2-5h8q2 0 1 1.500z" fill="#f5241a" />
                    <path d="M0 1q0-1 1-1h6l7 18-1 10q-2 1-3.500-1z" fill="#fb1a1d" />
                    <path d="M19 0h8L15 27q-1 2-3 1.500T10 26z" fill="#ff5416" />
                </svg>
            </TrayItem>

            <button className="relative ml-auto flex shrink-0 items-center pr-[18px] text-[22px]">
                <svg width="33" height="28" viewBox="0 0 33 28" className="mr-[13px]" aria-hidden="true">
                    <circle cx="24" cy="10" r="8" fill="#7fb4e8" />
                    <path d="M7 27a7 7 0 0 1-1-14C7 5 11 1 17 1s9 4 9.500 8c4 1 6 4 6 8q0 10-9 10z" fill="#cdeafd" />
                </svg>
                <span className="mr-3">34°C</span>
                <span>AQI 32</span>
                <span className="absolute right-0 top-[3px] w-[73px] text-center text-lg leading-[25px]">
                    50℃<br />CPU温度
                </span>
            </button>
            <TrayItem label="显示隐藏的图标">
                <Svg w={18} h={12}><path d="M1 10l8-8 8 8" /></Svg>
            </TrayItem>
            <TrayItem label="更新">
                <Svg w={25} h={26}>
                    <path d="M13 22H1V4l22-3v13" />
                    <path d="M8 12a4.500 4.500 0 0 1 7-3M15 6v3h-3M16 13a4.500 4.500 0 0 1-7 3M9 19v-3h3" />
                    <circle cx="19" cy="20" r="6" fill="#ff9a0a" stroke="none" />
                </Svg>
            </TrayItem>
            <TrayItem label="网络">
                <Svg w={20} h={20}>
                    <path d="M1 19C1 9 9 1 19 1M6 19C6 12 12 6 19 6" opacity=".7" />
                    <path d="M11 19q0-8 8-8" />
                    <circle cx="17.500" cy="17.500" r="1.500" fill="#fff" stroke="none" />
                </Svg>
            </TrayItem>
            <TrayItem label="安全卫士">
                <svg width="24" height="24" viewBox="0 0 24 24" aria-hidden="true">
                    <circle cx="12" cy="12" r="12" fill="#f6cf16" />
                    <path d="M4 4a12 12 0 0 1 20 8Q18 3 4 4zM20 20A12 12 0 0 1 0 12q6 9 20 8z" fill="#1aa33c" />
                    <path d="M12 6.500v11M6.500 12h11" stroke="#14963a" strokeWidth="4" />
                </svg>
            </TrayItem>
            <TrayItem label="蓝牙">
                <svg width="19" height="24" viewBox="0 0 19 24" aria-hidden="true">
                    <rect width="19" height="24" rx="9" fill="#0a84ff" />
                    <path d="M5 8l9 8-4.500 4V4L14 8l-9 8" fill="none" stroke="#fff" strokeWidth="1.500" />
                </svg>
            </TrayItem>
            <TrayItem label="电池">
                <Svg w={26} h={20}>
                    <path d="M7 6h16v12H7V12" />
                    <path d="M9 8h12v8H9z" fill="#fff" />
                    <path d="M24.500 9v6M3 1v4M7 1v4M1 5h8v2q0 3-4 3t-4-3zM5 10v5" />
                </Svg>
            </TrayItem>
            <TrayItem label="音量">
                <Svg w={22} h={20}>
                    <path d="M1 7h4l5-5v16l-5-5H1zM13 8q1.500 2 0 4" />
                    <path d="M16 5q3.500 5 0 10M19 2q5 8 0 16" opacity=".5" />
                </Svg>
            </TrayItem>
            <TrayItem label="输入法" className="w-9 pb-[2px] text-[22px]">中</TrayItem>
            <TrayItem label="搜狗" className="w-12">
                <svg width="24" height="24" viewBox="0 0 24 24" aria-hidden="true">
                    <path d="M0 4L19 0l5 20-19 4z" fill="#f4511e" />
                    <path d="M18 6Q8 5.500 8 9t4.500 3.500T17 15t-10 2.500" fill="none" stroke="#fff" strokeWidth="3.500" />
                </svg>
            </TrayItem>
            <button className="w-[120px] shrink-0 pb-[3px] text-center text-lg leading-6">
                13:49 周三<br />2021/7/14
            </button>
            <TrayItem label="便笺" className="w-[54px]">
                <Svg w={25} h={24}>
                    <path d="M5 1h19v22H5zM5 4H1v19h4M9 7h11M9 12h11M9 17h6" />
                </Svg>
            </TrayItem>
            <TrayItem label="通知" className="w-[68px]">
                <Svg w={25} h={26}>
                    <path d="M0 1h25v20h-8l-5 4v-4H0z" fill="#fff" stroke="none" />
                    <path d="M4 6h17M4 11h17M4 16h10" stroke="#22303a" />
                    <path d="M20 13a5 5 0 1 0 4 8q-5 0-4-8z" fill="#fff" stroke="#22303a" />
                </Svg>
            </TrayItem>
            <span className="ml-[9px] w-px shrink-0 bg-[#7c878b]" />
            <span className="pointer-events-none absolute bottom-2 right-2 font-['Liberation_Sans',sans-serif] text-base leading-6 text-white/60">
                https://blog.csdn.net/m0_51290571
            </span>
        </div>
    );
}

export default function App() {
    return (
        <div className={clsx("relative flex h-screen w-full flex-col overflow-hidden bg-[#f5f6f9] font-light", SANS)}>
            <TitleBar />
            <TabRow />
            <Ribbon />
            <TextFilterMenu />
            <main className="relative flex min-h-0 flex-1">
                <div className="flex min-w-0 flex-1 flex-col">
                    <FormulaBar />
                    <div className="flex min-h-0 flex-1">
                        <Sheet />
                        <VerticalScroll />
                    </div>
                    <HorizontalScroll />
                </div>
                <SideRail />
                <FilterPanel />
            </main>
            <StatusBar />
            <Taskbar />
        </div>
    );
}
